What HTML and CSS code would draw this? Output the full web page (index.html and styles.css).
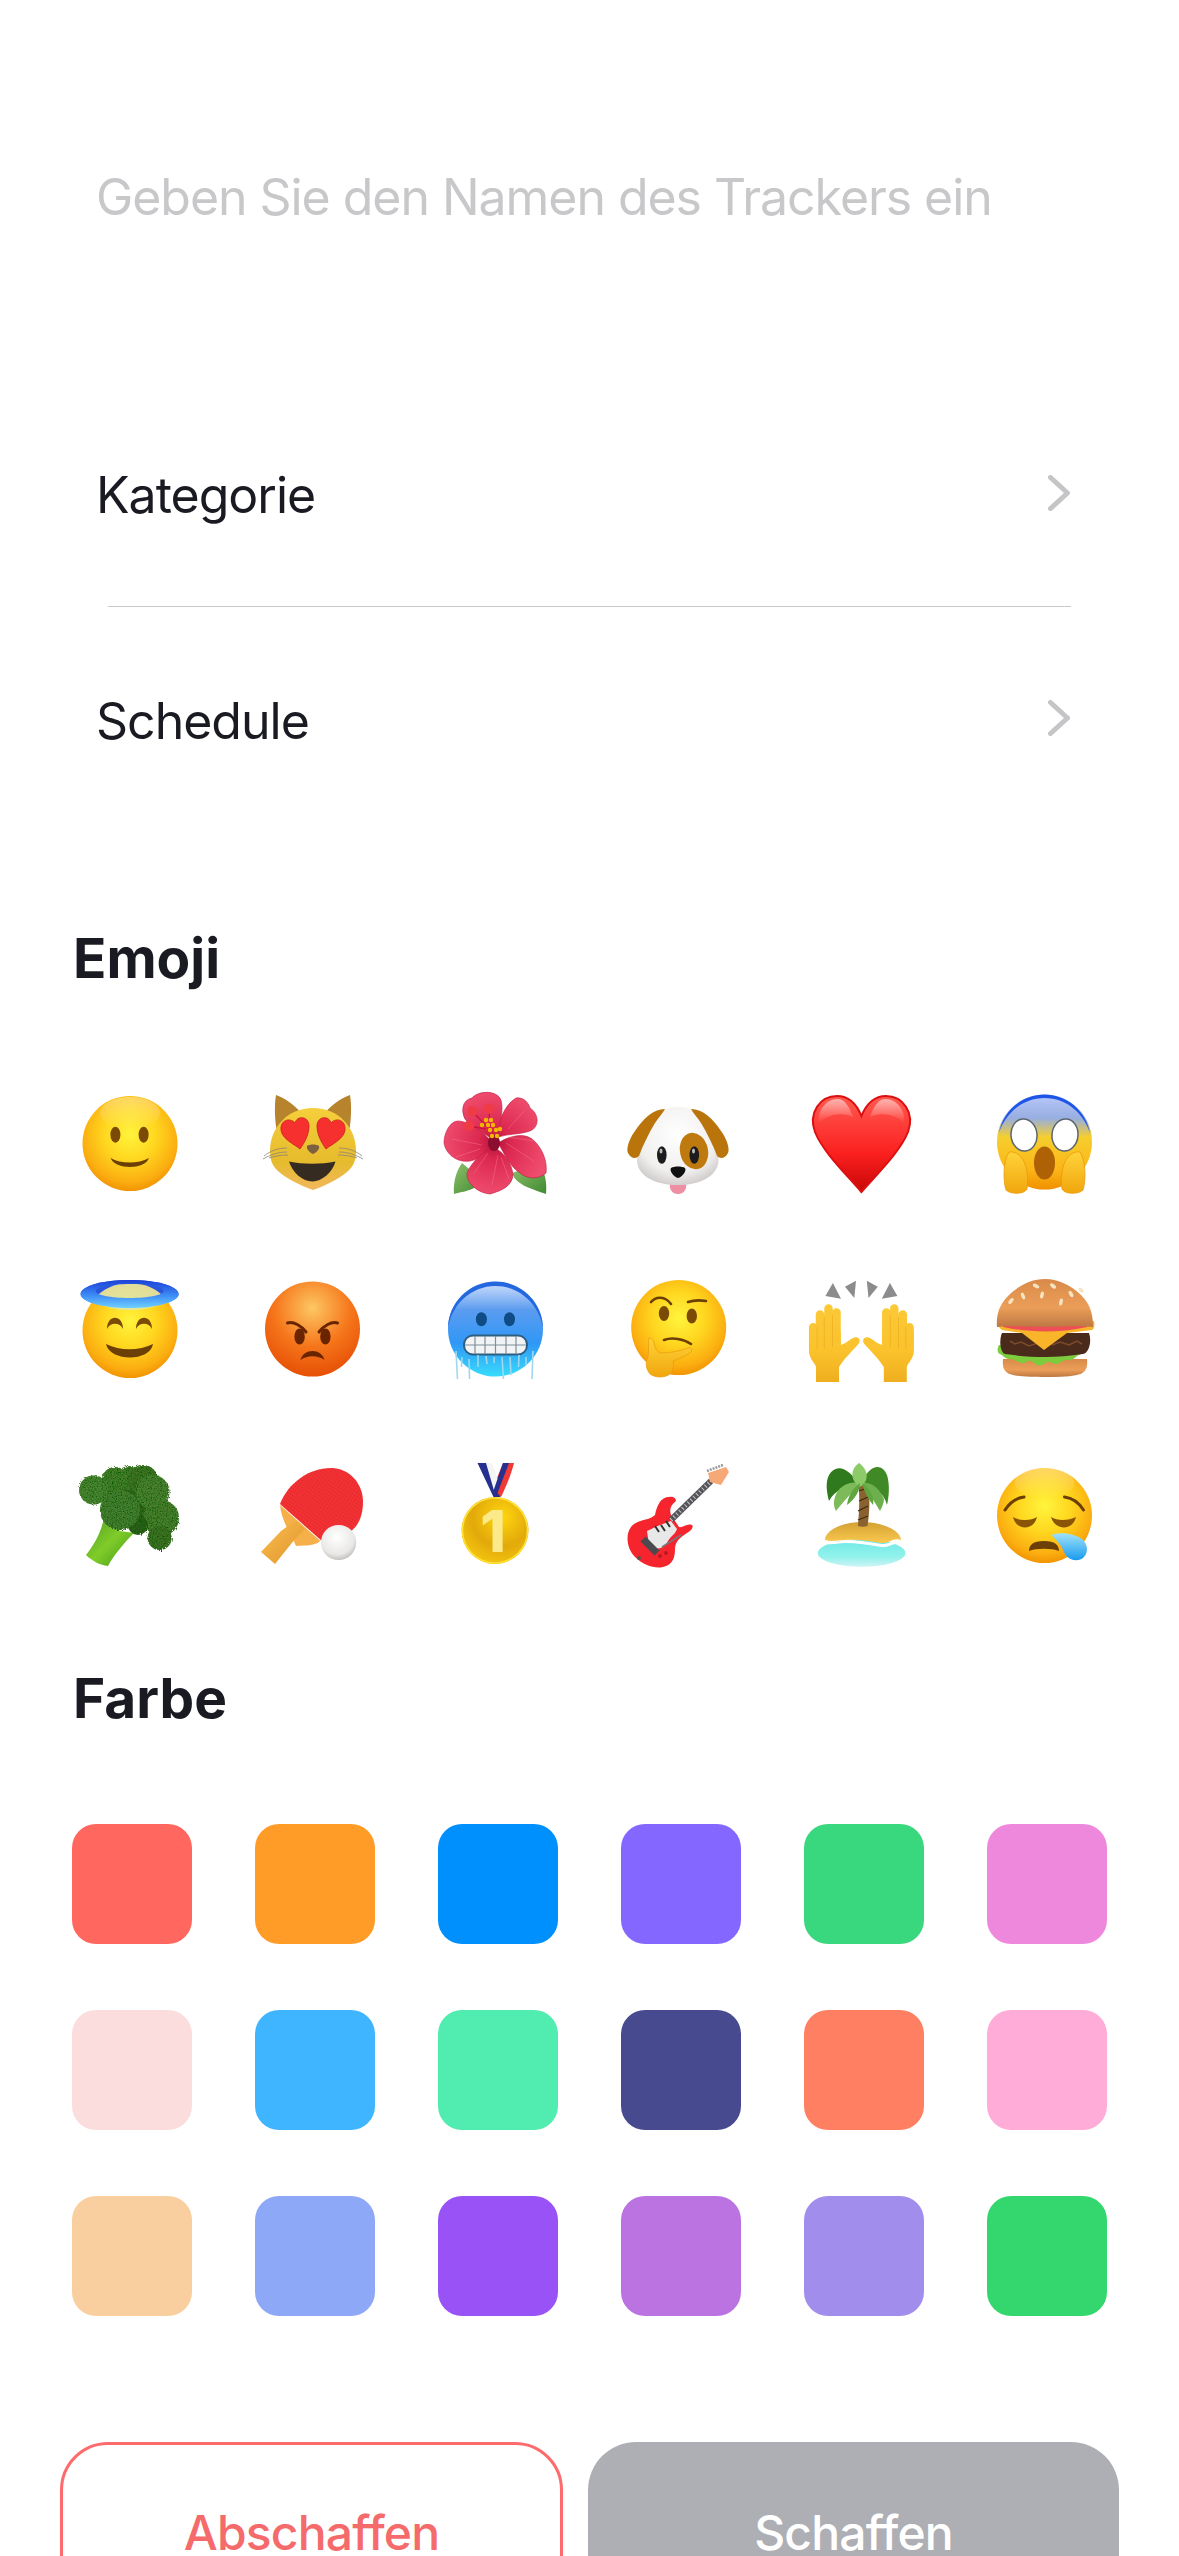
FILE: index.html
```html
<!DOCTYPE html>
<html lang="de">
<head>
    <meta charset="UTF-8">
    <meta name="viewport" content="width=device-width, initial-scale=1.0">
    <title>Neuer Tracker</title>
    <link rel="stylesheet" href="styles.css">
</head>
<body>

    <!-- Shared gradients for the emoji -->
    <svg class="defs" aria-hidden="true">
        <defs>
            <radialGradient id="face" cx=".5" cy=".4" r=".62">
                <stop offset="0" stop-color="#fff43c"/><stop offset=".45" stop-color="#ffd61f"/>
                <stop offset=".82" stop-color="#fbad10"/><stop offset="1" stop-color="#ef8f00"/>
            </radialGradient>
            <linearGradient id="shine" x1="0" y1="0" x2="0" y2="1">
                <stop offset="0" stop-color="#fff" stop-opacity=".55"/><stop offset="1" stop-color="#fff" stop-opacity="0"/>
            </linearGradient>
            <linearGradient id="catFace" x1="0" y1="0" x2="0" y2="1">
                <stop offset="0" stop-color="#f5cf3c"/><stop offset=".65" stop-color="#e6bb2c"/><stop offset="1" stop-color="#f2b75e"/>
            </linearGradient>
            <radialGradient id="petal" gradientUnits="userSpaceOnUse" cx="59" cy="60" r="54">
                <stop offset="0" stop-color="#b0123a"/><stop offset=".3" stop-color="#dc2850"/><stop offset="1" stop-color="#f04e6e"/>
            </radialGradient>
            <linearGradient id="leaf" x1="0" y1="0" x2="1" y2="1">
                <stop offset="0" stop-color="#8fc06a"/><stop offset="1" stop-color="#3f8a32"/>
            </linearGradient>
            <radialGradient id="dogHead" cx=".5" cy=".35" r=".7">
                <stop offset="0" stop-color="#fff"/><stop offset=".7" stop-color="#f1efee"/><stop offset="1" stop-color="#c9c6c4"/>
            </radialGradient>
            <linearGradient id="heart" x1="0" y1="0" x2="0" y2="1">
                <stop offset="0" stop-color="#ff5a50"/><stop offset=".6" stop-color="#fb2020"/><stop offset="1" stop-color="#c80606"/>
            </linearGradient>
            <linearGradient id="scream" x1="0" y1="0" x2="0" y2="1">
                <stop offset="0" stop-color="#b9c8fb"/><stop offset=".25" stop-color="#97aee0"/><stop offset=".45" stop-color="#f6cf2d"/>
                <stop offset=".8" stop-color="#fbb417"/><stop offset="1" stop-color="#ef9000"/>
            </linearGradient>
            <linearGradient id="hand" x1="0" y1="0" x2="0" y2="1">
                <stop offset="0" stop-color="#ffd33a"/><stop offset="1" stop-color="#f1a60d"/>
            </linearGradient>
            <linearGradient id="palm" gradientUnits="userSpaceOnUse" x1="0" y1="35" x2="0" y2="113">
                <stop offset="0" stop-color="#fbc937"/><stop offset=".6" stop-color="#fbc22c"/><stop offset="1" stop-color="#eeae1f"/>
            </linearGradient>
            <linearGradient id="halo" x1="0" y1="0" x2="0" y2="1">
                <stop offset="0" stop-color="#1c3fd6"/><stop offset=".55" stop-color="#3d8cf6"/><stop offset="1" stop-color="#6fd0ff"/>
            </linearGradient>
            <radialGradient id="angry" cx=".5" cy=".28" r=".8">
                <stop offset="0" stop-color="#fdc763"/><stop offset=".5" stop-color="#f6761b"/><stop offset="1" stop-color="#e24600"/>
            </radialGradient>
            <linearGradient id="cold" x1="0" y1="0" x2="0" y2="1">
                <stop offset="0" stop-color="#d4e1fb"/><stop offset=".3" stop-color="#5b9cf0"/><stop offset=".65" stop-color="#2f97f6"/><stop offset="1" stop-color="#38dcfc"/>
            </linearGradient>
            <linearGradient id="bun" x1="0" y1="0" x2="0" y2="1">
                <stop offset="0" stop-color="#d98a4a"/><stop offset=".6" stop-color="#eb9e58"/><stop offset="1" stop-color="#bd7743"/>
            </linearGradient>
            <linearGradient id="stem" x1="0" y1="0" x2="1" y2="1">
                <stop offset="0" stop-color="#4f9a22"/><stop offset=".5" stop-color="#80cc2a"/><stop offset="1" stop-color="#3f9a14"/>
            </linearGradient>
            <radialGradient id="ball" cx=".45" cy=".35" r=".7">
                <stop offset="0" stop-color="#fff"/><stop offset=".7" stop-color="#e9e8e6"/><stop offset="1" stop-color="#b8b6b3"/>
            </radialGradient>
            <linearGradient id="wood" x1="0" y1="0" x2="1" y2="1">
                <stop offset="0" stop-color="#fbc050"/><stop offset="1" stop-color="#e0932b"/>
            </linearGradient>
            <radialGradient id="gold" cx=".6" cy=".3" r=".8">
                <stop offset="0" stop-color="#ffd60f"/><stop offset=".55" stop-color="#e2a90a"/><stop offset="1" stop-color="#f8cc10"/>
            </radialGradient>
            <linearGradient id="sand" x1="0" y1="0" x2="0" y2="1">
                <stop offset="0" stop-color="#d2a133"/><stop offset="1" stop-color="#fbc94f"/>
            </linearGradient>
            <linearGradient id="water" x1="0" y1="0" x2="0" y2="1">
                <stop offset="0" stop-color="#6fe9e6"/><stop offset=".65" stop-color="#93f2ec"/><stop offset="1" stop-color="#cdf3f5"/>
            </linearGradient>
            <linearGradient id="tear" x1="0" y1="0" x2="0" y2="1">
                <stop offset="0" stop-color="#9fe2fb"/><stop offset="1" stop-color="#1a9bee"/>
            </linearGradient>
            <pattern id="rubber" width="3" height="3" patternUnits="userSpaceOnUse" patternTransform="rotate(35)">
                <circle cx="1.500" cy="1.500" r=".8" fill="#c81d22" opacity=".55"/>
            </pattern>
            <filter id="rough" x="-5%" y="-5%" width="110%" height="110%">
                <feTurbulence type="fractalNoise" baseFrequency=".8" numOctaves="2" seed="4" result="n"/>
                <feDisplacementMap in="SourceGraphic" in2="n" scale="4" result="d"/>
                <feColorMatrix in="n" type="matrix" values="0 0 0 0 0  0 0 0 0 .1  0 0 0 0 0  0 0 0 -2.500 1.500" result="dark"/>
                <feComposite in="dark" in2="d" operator="in" result="spots"/>
                <feMerge><feMergeNode in="d"/><feMergeNode in="spots"/></feMerge>
            </filter>
        </defs>
    </svg>

    <div class="page">

        <!-- Name des Trackers -->
        <div class="name-field">Geben Sie den Namen des Trackers ein</div>

        <!-- Kategorie / Schedule -->
        <div class="options">
            <div class="option">
                <span>Kategorie</span>
                <svg class="chevron" viewBox="0 0 22 36"><polyline points="2.5,2.5 19.5,18 2.5,33.5"/></svg>
            </div>
            <div class="divider"></div>
            <div class="option option-last">
                <span>Schedule</span>
                <svg class="chevron" viewBox="0 0 22 36"><polyline points="2.5,2.5 19.5,18 2.5,33.5"/></svg>
            </div>
        </div>

        <h2 class="section-title title-emoji">Emoji</h2>
        <div class="emoji-grid">

            <!-- laechelnd -->
            <svg class="emoji" viewBox="0 0 120 120">
                <circle cx="60" cy="60.500" r="47.500" fill="url(#face)"/>
                <ellipse cx="60" cy="30" rx="30" ry="16" fill="url(#shine)" opacity=".6"/>
                <ellipse cx="45.400" cy="51.700" rx="5" ry="8" fill="#7a4a06"/>
                <ellipse cx="73.600" cy="51.700" rx="5" ry="8" fill="#7a4a06"/>
                <path d="M40.500 75c10 6 28 6 38.500 0-4 12-34 12-38.500 0z" fill="#6b3f05"/>
            </svg>

            <!-- Katze mit Herzaugen -->
            <svg class="emoji" viewBox="0 0 120 120">
                <path d="M23 12c8 3 18 9 24 17L24 50c-2-12-3-26-1-38zM97 12c-8 3-18 9-24 17l23 21c2-12 3-26 1-38z" fill="#b7832c"/>
                <path d="M60 25c26 0 43 20 43 43 0 10-3 16-9 21-10 8-23 14-34 18-11-4-24-10-34-18-6-5-9-11-9-21 0-23 17-43 43-43z" fill="url(#catFace)"/>
                <path d="M47 66c-6-5-18-10-19-19-1-10 9-13 14-7 2-8 14-7 14 3 0 8-4 16-9 23z" fill="#f5302f" stroke="#c91d1d" stroke-width=".8"/>
                <path d="M73 66c6-5 18-10 19-19 1-10-9-13-14-7-2-8-14-7-14 3 0 8 4 16 9 23z" fill="#f5302f" stroke="#c91d1d" stroke-width=".8"/>
                <path d="M54 63c3-2 9-2 12 0 1 3-3 7-6 8-3-1-7-5-6-8z" fill="#7d6040"/>
                <path d="M36 78.500c14 3 32 3 46.500 0-3 11-14 20-23 20-10 0-20-9-23.500-20z" fill="#352b20"/>
                <g stroke="#8a8378" stroke-width=".8" fill="none">
                    <path d="M34 65c-9 0-17 3-23 8M34 69c-9 0-17 3-24 7M35 72c-7 0-13 1-19 3"/>
                    <path d="M86 65c9 0 17 3 23 8M86 69c9 0 17 3 24 7M85 72c7 0 13 1 19 3"/>
                </g>
            </svg>

            <!-- Hibiskus -->
            <svg class="emoji" viewBox="0 0 120 120">
                <path d="M26 80c-6 8-9 20-8 31 10-3 22-3 28-14z" fill="url(#leaf)"/>
                <path d="M76 90c4 12 20 16 34 21 1-10 0-22-8-30z" fill="url(#leaf)"/>
                <g fill="url(#petal)" stroke="#bd1c44" stroke-width=".6">
                    <path d="M60 55C62 40 68 22 80 15 86 14 92 18 94 25 102 30 104 42 96 47 86 52 72 50 60 55z"/>
                    <path d="M62 60C75 52 88 50 96 56 104 62 112 76 110 90 104 96 92 97 84 90 74 84 68 70 62 60z"/>
                    <path d="M58 58C50 50 34 44 29 36 25 28 26 17 36 15 42 8 58 7 64 15 68 22 66 40 58 58z"/>
                    <path d="M58 62C50 50 32 38 22 38 14 38 8 50 8 60 10 72 22 80 34 78 44 76 52 70 58 62z"/>
                    <path d="M58 64C48 68 36 78 31 90 30 100 42 110 54 111 64 108 76 104 77 92 76 80 68 70 58 64z"/>
                </g>
                <g stroke="#f77d98" stroke-width=".7" opacity=".6" fill="none">
                    <path d="M62 72l-6 30M65 74l8 22M52 70l-14 20M70 60l28 18M72 54l26 4M72 46l16-18M46 62l-30-6M44 66l-24 8"/>
                </g>
                <ellipse cx="58" cy="60" rx="6" ry="8" fill="#8b0d2f"/>
                <path d="M54 47L37 29M54 46L53 26M50 46L33 43" stroke="#c8163f" stroke-width="1.300"/>
                <circle cx="36.500" cy="28" r="5.300" fill="#ef3b45"/><circle cx="53" cy="25.500" r="5.300" fill="#ef3b45"/><circle cx="33" cy="42.700" r="5.300" fill="#ef3b45"/>
                <g fill="#f4b800">
                    <circle cx="50" cy="37" r="2.200"/><circle cx="55" cy="37" r="2.200"/><circle cx="46" cy="42" r="2.200"/><circle cx="52" cy="42" r="2.200"/>
                    <circle cx="57" cy="42" r="2.200"/><circle cx="54" cy="47" r="2.200"/><circle cx="60" cy="47" r="2.200"/><circle cx="64" cy="46" r="2.200"/>
                    <circle cx="56" cy="53" r="2.200"/><circle cx="61" cy="53" r="2.200"/>
                </g>
            </svg>

            <!-- Hund -->
            <svg class="emoji" viewBox="0 0 120 120">
                <path d="M51 99c5-3 12-3 16 0 1 6-1 12-8 12s-9-6-8-12z" fill="#ee8fa3"/>
                <path d="M59 23.700C76 23.700 88 36 90 52 92 58 100 66 99.600 78 98 94 80 102 59 102 38 102 19 94 18 78 18 66 26 58 28 52 30 36 42 23.700 59 23.700z" fill="url(#dogHead)"/>
                <ellipse cx="75" cy="68" rx="14" ry="18.500" fill="#bf7a0f" transform="rotate(-12 75 68)"/>
                <path d="M46 26C34 26 24 36 16 48 10 56 7 66 9 70 12 76 17 76 20 73 24 62 30 50 36 40 40 34 44 30 46 26z" fill="#b9740c"/>
                <path d="M72 26C84 26 94 36 102 48 108 56 111 66 109 70 106 76 101 76 98 73 94 62 88 50 82 40 78 34 74 30 72 26z" fill="#b9740c"/>
                <ellipse cx="42.800" cy="72" rx="4.800" ry="8.800" fill="#1c1c1e"/><ellipse cx="75.300" cy="72" rx="4.800" ry="8.800" fill="#1c1c1e"/>
                <ellipse cx="42" cy="68" rx="1.500" ry="2.500" fill="#fff" opacity=".7"/><ellipse cx="74.500" cy="68" rx="1.500" ry="2.500" fill="#fff" opacity=".7"/>
                <path d="M52 85c3-2 11-2 14 0 2 3-3 9-7 10-4-1-9-7-7-10z" fill="#111"/>
            </svg>

            <!-- Herz -->
            <svg class="emoji" viewBox="0 0 120 120">
                <path d="M59.400 109C44 91 21 69 13 49 6 30 18 13 35 13c12 0 20 9 24.400 20C64 22 72 13 84 13c17 0 29 17 22 36-8 20-31 42-46.600 60z" fill="url(#heart)" stroke="#dc1010" stroke-width="2"/>
                <path d="M36 16c-13 0-21 13-19 24 8-9 24-11 34-6-3-9-8-18-15-18zM83 16c-7 0-12 9-15 18 10-5 26-3 34 6 2-11-6-24-19-24z" fill="url(#shine)"/>
            </svg>

            <!-- Schrei -->
            <svg class="emoji" viewBox="0 0 120 120">
                <circle cx="59.500" cy="59" r="47.500" fill="url(#scream)"/>
                <path d="M14 50C18 28 37 11.500 59.500 11.500S101 28 105 50C99 31 82 15 59.500 15S20 31 14 50z" fill="#1f55e6"/>
                <ellipse cx="39" cy="52" rx="13" ry="16" fill="#fff" stroke="#5c6470" stroke-width="1.500" transform="rotate(-6 39 52)"/>
                <ellipse cx="80" cy="52" rx="13" ry="16" fill="#fff" stroke="#5c6470" stroke-width="1.500" transform="rotate(6 80 52)"/>
                <ellipse cx="59.500" cy="80" rx="10.500" ry="16.500" fill="#ae6205"/>
                <path d="M24 69c7-1 13 4 16 12 3 9 3 18 2 25-2 5-16 6-21 1-3-9-3-29 3-38z" fill="url(#hand)" stroke="#e89a0a" stroke-width=".8"/>
                <path d="M95 69c-7-1-13 4-16 12-3 9-3 18-2 25 2 5 16 6 21 1 3-9 3-29-3-38z" fill="url(#hand)" stroke="#e89a0a" stroke-width=".8"/>
            </svg>

            <!-- Heiligenschein -->
            <svg class="emoji" viewBox="0 0 120 120">
                <ellipse cx="59.600" cy="25" rx="49" ry="14" fill="#2a55dd"/>
                <circle cx="60" cy="61.500" r="47.500" fill="url(#face)"/>
                <path d="M60 14c-15 0-28 6-37 17 9 7 24 10 37 10s28-3 37-10c-9-11-22-17-37-17z" fill="#d8e6c4" opacity=".75"/>
                <path d="M10.600 25c0-8 22-14 49-14s49 6 49 14-22 14-49 14-49-6-49-14zm15-3c0 4 15 7 34 7s34-3 34-7-15-7-34-7-34 3-34 7z" fill="url(#halo)" fill-rule="evenodd"/>
                <path d="M37 60c0-15 16-15 16 0-3-7-13-7-16 0zM66 60c0-15 16-15 16 0-3-7-13-7-16 0z" fill="#7a4a06"/>
                <path d="M36 75c14 7 33 7 47 0-3 18-43 18-47 0z" fill="#6b3f05"/>
            </svg>

            <!-- wuetend -->
            <svg class="emoji" viewBox="0 0 120 120">
                <circle cx="59.500" cy="60" r="47.500" fill="url(#angry)"/>
                <ellipse cx="46.600" cy="67.500" rx="5.200" ry="8" fill="#6b2400"/><ellipse cx="72.400" cy="67.500" rx="5.200" ry="8" fill="#6b2400"/>
                <path d="M34.500 54c6-2 14 3 18.500 9" fill="none" stroke="#6b2400" stroke-width="3" stroke-linecap="round"/>
                <path d="M84.500 54c-6-2-14 3-18.500 9" fill="none" stroke="#6b2400" stroke-width="3" stroke-linecap="round"/>
                <path d="M47.500 91c3-12 21-12 24 0-7-5-17-5-24 0z" fill="#6b2400"/>
            </svg>

            <!-- Frieren -->
            <svg class="emoji" viewBox="0 0 120 120">
                <circle cx="59.500" cy="60" r="47.500" fill="url(#cold)"/>
                <path d="M12 60C12 34 33 12.500 59.500 12.500S107 34 107 60C104 36 84 17 59.500 17S15 36 12 60z" fill="#2468e0"/>
                <ellipse cx="45.400" cy="50.300" rx="5.500" ry="7" fill="#0f4c86"/><ellipse cx="73.500" cy="50.300" rx="5.500" ry="7" fill="#0f4c86"/>
                <rect x="28" y="66.500" width="63" height="19" rx="9" fill="#f1f3f4" stroke="#2d5f80" stroke-width="2"/>
                <path d="M39 67v18M49 67v18M59.500 67v18M70 67v18M80 67v18M29 76h61" stroke="#7d8f9b" stroke-width="1.200"/>
                <g fill="none" stroke="#9fd8ee" stroke-width="1.600">
                    <path d="M20 82l1.500 28M26 88l-.5 10M33 90l.5 20M42 86v12M50 87l1 8M66 88l1.500 22M58 88v6M74 88l1 18M83 86l-.5 12M90 88v8M97 82l-1 28"/>
                </g>
            </svg>

            <!-- nachdenklich -->
            <svg class="emoji" viewBox="0 0 120 120">
                <circle cx="59.700" cy="58.500" r="47.500" fill="url(#face)"/>
                <ellipse cx="45" cy="44.500" rx="5.200" ry="7.500" fill="#7a4a06"/><ellipse cx="72.800" cy="47" rx="5.200" ry="7.500" fill="#7a4a06"/>
                <path d="M32 33c5-6 14-6 20 2" fill="none" stroke="#6b3f05" stroke-width="2.600" stroke-linecap="round"/>
                <path d="M69 33c6-2 12-2 18-1" fill="none" stroke="#6b3f05" stroke-width="2.600" stroke-linecap="round"/>
                <path d="M45 71c8-3 20-1 27 4" fill="none" stroke="#6b3f05" stroke-width="2.600" stroke-linecap="round"/>
                <path d="M30 69c3 0 4 2 5 5 1 5 3 9 6 10 10 0 20-2 28-5 4-1 5 3 2 5-5 3-11 6-17 8 1 5 0 10-3 13-5 4-15 4-20 0-4-5-5-11-2-17 1-6 0-13 1-19z" fill="url(#hand)" stroke="#e89a0a" stroke-width=".7"/>
            </svg>

            <!-- Haende hoch -->
            <svg class="emoji" viewBox="0 0 120 120">
                <g fill="#8c8c8e">
                    <path d="M30.900 14L23.400 27 39 29.700z"/>
                    <path d="M54 11.700L43 17.700 52.300 29z"/>
                    <path d="M64.800 11.700L75.800 17.700 66.500 29z"/>
                    <path d="M87.900 14L95.400 27 79.800 29.700z"/>
                </g>
                <g id="raisedHand">
                    <g stroke="url(#palm)" stroke-width="8.500" stroke-linecap="round" fill="none">
                        <path d="M11.200 58.300l.01 22M18 45.500l.01 35M26.500 39.500l.01 41M34.500 43.500l.01 37"/>
                    </g>
                    <path d="M7 62V84C9 92 13 94 14 98V113H37V98C42 90 50 82 56.500 75 60 70 55 67 51 69 47 71 43 75 38.700 76V62z" fill="url(#palm)"/>
                    <path d="M15 58v22M22.300 48v32M30.500 46v32" stroke="#e3a41a" stroke-width=".7" opacity=".7"/>
                </g>
                <use href="#raisedHand" transform="translate(118.800 0) scale(-1 1)"/>
            </svg>

            <!-- Burger -->
            <svg class="emoji" viewBox="0 0 120 120">
                <path d="M18 90h84c1 10-2 14-10 16-10 2-22 2-32 2s-24 0-32-2c-8-2-11-6-10-16z" fill="url(#bun)"/>
                <path d="M14 76c-2 3-2 8 1 9 4 2 6 6 11 5 4-1 7 5 12 4 4-1 7-4 10-1 4 4 8 5 12 1 4-3 7 1 12 1 4-1 7-5 11-4 5 1 8-4 11-5 3-1 4-6 2-9z" fill="#7ccc3e"/>
                <path d="M17 64h87c3 8 0 20-6 21-26 4-50 4-78 0-5-2-6-14-3-21z" fill="#4a2a1a"/>
                <path d="M25 72l5 3 6-2 8 4 9-3M67 76l8-3 9 3 8-4 5 3" stroke="#7a4a2c" stroke-width="1.500" fill="none"/>
                <path d="M13 52c30-3 65-3 96 0 1 4 0 8-2 9l-25 3-23 17-22-17-20-3c-3-2-5-5-4-9z" fill="#f8b52a"/>
                <path d="M18 52h84v6c-28 6-56 6-84 0z" fill="#ee4f55"/>
                <path d="M12 58c-1-12 2-22 12-32 9-9 22-16 36-16s27 7 36 16c10 10 12 20 12 32-3 0-8-1-12-1-25 1-50 1-74 0-5 0-7 1-10 1z" fill="url(#bun)"/>
                <g fill="#f6e3c2">
                    <ellipse cx="38" cy="27" rx="1.800" ry="3.500" transform="rotate(-20 38 27)"/><ellipse cx="51" cy="17" rx="1.800" ry="3.500" transform="rotate(-60 51 17)"/>
                    <ellipse cx="68" cy="17" rx="1.800" ry="3.500" transform="rotate(-50 68 17)"/><ellipse cx="57" cy="26" rx="1.800" ry="3.500" transform="rotate(10 57 26)"/>
                    <ellipse cx="76" cy="33" rx="1.800" ry="3.500" transform="rotate(10 76 33)"/><ellipse cx="86" cy="25" rx="1.800" ry="3.500" transform="rotate(-30 86 25)"/>
                    <ellipse cx="26" cy="32" rx="1.800" ry="3.500" transform="rotate(40 26 32)"/><ellipse cx="96" cy="21" rx="1.800" ry="3" transform="rotate(-50 96 21)"/>
                </g>
            </svg>

            <!-- Brokkoli -->
            <svg class="emoji" viewBox="0 0 120 120">
                <path d="M34 62C32 76 24 90 16 100 22 106 30 110 38 111 44 100 54 88 64 78L50 76 44 70z" fill="url(#stem)"/>
                <g filter="url(#rough)">
                    <circle cx="60" cy="45" r="26" fill="#33641c"/>
                    <circle cx="59" cy="23" r="12" fill="#42792a"/><circle cx="73" cy="25" r="15" fill="#3f7527"/>
                    <circle cx="45" cy="25" r="13" fill="#45802c"/><circle cx="23.600" cy="35" r="14.500" fill="#4c8732"/>
                    <circle cx="82.500" cy="37" r="17" fill="#4b8230"/><circle cx="91" cy="63" r="18" fill="#4a802f"/>
                    <circle cx="89.600" cy="83" r="12" fill="#3f7228"/><circle cx="68" cy="70" r="10" fill="#2f5e1c"/>
                    <circle cx="50" cy="55" r="20" fill="#478030"/>
                </g>
            </svg>

            <!-- Tischtennis -->
            <svg class="emoji" viewBox="0 0 120 120">
                <path d="M27 50L67.400 86C60 92 48 90 43 91L38 80C32 70 28 60 27 50z" fill="#f6b04a"/>
                <path d="M43 65L52 74 42 84 22 109 8 97 28 76z" fill="url(#wood)"/>
                <path d="M27 49C35 28 56 13 78 13 96 13 110 28 110 47 110 62 104 72 98 76L90 80 70 87z" fill="#f33134"/>
                <path d="M27 49C35 28 56 13 78 13 96 13 110 28 110 47 110 62 104 72 98 76L90 80 70 87z" fill="url(#rubber)"/>
                <circle cx="85.600" cy="87.500" r="17.600" fill="url(#ball)"/>
            </svg>

            <!-- Medaille -->
            <svg class="emoji" viewBox="0 0 120 120">
                <path d="M41.500 8h11l12 34h-7z" fill="#25308f"/>
                <path d="M78 8H67L57 33l8 9c5-10 10-22 13-34z" fill="#f03a36"/>
                <path d="M52 8l6 14 4-14z" fill="#fff"/>
                <path d="M50 8h6l8 22-5 9z" fill="#f5f5f5"/>
                <path d="M67 8h6L60 42l-3-5z" fill="#25308f"/>
                <circle cx="59" cy="75.500" r="33.500" fill="url(#gold)"/>
                <circle cx="59" cy="75.500" r="32.500" fill="none" stroke="#ffe23a" stroke-width="1.500"/>
                <text class="medal-digit" x="57" y="97" text-anchor="middle">1</text>
            </svg>

            <!-- Gitarre -->
            <svg class="emoji" viewBox="0 0 120 120">
                <path d="M50 42C42 42 38 50 36 60 30 66 18 64 12 72 6 80 8 94 16 102 24 110 36 114 44 112 54 110 56 102 56 94 56 86 62 82 68 78 72 76 75 72 73 70 68 68 64 73 60 72L52 60C50 54 52 50 57 46 57 43 54 41 50 42z" fill="#f6252d"/>
                <path d="M28 76C36 72 46 68 52 66L58 74C56 80 50 82 48 88 44 94 36 96 30 90z" fill="#e8e8e8"/>
                <path d="M52 65L92 26" stroke="#55555a" stroke-width="6"/>
                <path d="M52 65L92 26" stroke="#c8c8c8" stroke-width="4" stroke-dasharray="1 3"/>
                <path d="M89 18L107 12 110 17 102 30 91 27z" fill="#f7a877"/>
                <path d="M88 16L104 10" stroke="#9a9a9a" stroke-width="2.500" stroke-dasharray="2 1"/>
                <path d="M24 84L38 98" stroke="#4a4a4f" stroke-width="7"/>
                <path d="M36 71l4 6M42 70l4 6M47 66l4 6" stroke="#333" stroke-width="2"/>
                <path d="M43 92L62 80" stroke="#77777c" stroke-width="1.500"/>
                <circle cx="41" cy="101" r="2" fill="#b91a1e"/><circle cx="47" cy="98" r="2" fill="#b91a1e"/>
                <circle cx="20" cy="103" r="2" fill="#555"/>
            </svg>

            <!-- Insel -->
            <svg class="emoji" viewBox="0 0 120 120">
                <ellipse cx="59.600" cy="98" rx="44" ry="13.700" fill="url(#water)"/>
                <path d="M23 85c0-10 18-18 37-18s39 8 39 18c-8-3-12 4-20 3-12-2-24-4-36-3-7 0-13 2-20 0z" fill="url(#sand)"/>
                <path d="M21 86c7 3 14 0 22-1 12 0 24 2 36 4 8 1 12-5 22-3l1 2c-9-2-14 5-23 4-12-2-24-4-36-4-8 0-15 3-22 0z" fill="#fff"/>
                <path d="M56.500 28h9c3 14 2 30 0 43-3 1-7 1-9.500 0 1-14 2-28 .5-43z" fill="#8a6230"/>
                <path d="M57 36l9-3M57 46l9-4M56 56l10-5M56 65l10-4" stroke="#3f2a10" stroke-width="1.200"/>
                <path d="M58 30C46 12 34 8 27 20 23 28 25 38 27 46 32 36 44 30 58 30z" fill="#2f7a1c"/>
                <path d="M58 30C68 8 80 8 85 20 88 30 87 42 85 50 82 38 72 30 58 30z" fill="#3f8a26"/>
                <path d="M58 28C46 26 36 32 33 42 31 48 32 52 34 56 40 48 50 38 58 28z" fill="#7dbb5a"/>
                <path d="M58 28C70 26 78 34 82 44 82 48 80 52 78 56 72 46 66 36 58 28z" fill="#6fb04e"/>
                <path d="M58 32C48 26 48 14 57 8 66 14 68 26 58 32z" fill="#8ccb68"/>
                <path d="M58 28C50 34 46 42 45 50 53 44 58 36 58 28zM60 28C62 36 66 44 71 50 73 42 67 32 60 28z" fill="#5fa63f"/>
            </svg>

            <!-- schlaefrig -->
            <svg class="emoji" viewBox="0 0 120 120">
                <circle cx="59.500" cy="60.500" r="47.500" fill="url(#face)"/>
                <ellipse cx="59.500" cy="28" rx="30" ry="15" fill="url(#shine)" opacity=".6"/>
                <path d="M20 55c5-8 11-12 19-13" fill="none" stroke="#6b3f05" stroke-width="3" stroke-linecap="round"/>
                <path d="M98.500 55c-5-8-11-12-19-13" fill="none" stroke="#6b3f05" stroke-width="3" stroke-linecap="round"/>
                <path d="M28 62c7 4 18 4 24 0-3 14-21 14-24 0zM66 62c6 4 17 4 25 0-3 14-21 14-25 0z" fill="#8a5606"/>
                <path d="M44 96c0-6 4-10 15-10s15 4 15 10c-7-3-23-3-30 0z" fill="#6b3f05"/>
                <path d="M66.500 80c8-3 20-2 29 3 9 6 8 17 1 21-7 3-14 0-17-6-3-8-8-13-13-18z" fill="url(#tear)"/>
            </svg>
        </div>

        <h2 class="section-title title-color">Farbe</h2>
        <div class="color-grid">
            <div class="swatch c1"></div><div class="swatch c2"></div><div class="swatch c3"></div>
            <div class="swatch c4"></div><div class="swatch c5"></div><div class="swatch c6"></div>
            <div class="swatch c7"></div><div class="swatch c8"></div><div class="swatch c9"></div>
            <div class="swatch c10"></div><div class="swatch c11"></div><div class="swatch c12"></div>
            <div class="swatch c13"></div><div class="swatch c14"></div><div class="swatch c15"></div>
            <div class="swatch c16"></div><div class="swatch c17"></div><div class="swatch c18"></div>
        </div>

        <div class="actions">
            <button class="btn btn-cancel">Abschaffen</button>
            <button class="btn btn-create">Schaffen</button>
        </div>
    </div>

</body>
</html>
```

FILE: styles.css
```css
* {
    box-sizing: border-box;
}

html, body {
    margin: 0;
    padding: 0;
    background: #fff;
}

body {
    font-family: Inter, "Liberation Sans", sans-serif;
    color: #1a1b22;
    width: 1179px;
    height: 2556px;
    overflow: hidden;
}

.defs {
    position: absolute;
    width: 0;
    height: 0;
}

.page {
    padding-top: 84px;
}

/* Name und Optionen */
.name-field {
    height: 225px;
    padding-left: 96px;
    display: flex;
    align-items: center;
    font-size: 50px;
    letter-spacing: -1.05px;
    color: #c8c8cb;
}

.options {
    margin-top: 72px;
}

.option {
    height: 225px;
    padding: 0 109px 0 96px;
    display: flex;
    align-items: center;
    justify-content: space-between;
    font-size: 50px;
    letter-spacing: -1px;
}

.option span {
    margin-top: 3px;
}

.option-last {
    height: 224px;
}

.divider {
    height: 1px;
    margin: 0 108px;
    background: #c9c9cc;
}

.chevron {
    width: 22px;
    height: 36px;
    margin-top: -2px;
    fill: none;
    stroke: #c5c5c8;
    stroke-width: 5;
    stroke-linecap: round;
    stroke-linejoin: round;
}

/* Abschnitte */
.section-title {
    margin: 0;
    padding-left: 73px;
    font-size: 55px;
    line-height: 70px;
    font-weight: 700;
}

.title-emoji {
    margin-top: 92px;
}

.title-color {
    margin-top: 88px;
}

.emoji-grid {
    margin: 90px 0 0 70px;
    display: grid;
    grid-template-columns: repeat(6, 120px);
    grid-auto-rows: 120px;
    column-gap: 63px;
    row-gap: 66px;
}

.emoji {
    width: 120px;
    height: 120px;
    display: block;
}

.medal-digit {
    font-family: Inter, sans-serif;
    font-size: 58px;
    font-weight: 800;
    fill: #fbe98a;
}

.color-grid {
    margin: 91px 0 0 72px;
    display: grid;
    grid-template-columns: repeat(6, 120px);
    grid-auto-rows: 120px;
    column-gap: 63px;
    row-gap: 66px;
}

.swatch {
    border-radius: 24px;
}

.c1 { background: #ff675f; }
.c2 { background: #ff9c28; }
.c3 { background: #0090fd; }
.c4 { background: #8467ff; }
.c5 { background: #39d77e; }
.c6 { background: #ee88dc; }
.c7 { background: #fbdddd; }
.c8 { background: #3fb5ff; }
.c9 { background: #50ecb0; }
.c10 { background: #474a8f; }
.c11 { background: #ff7f62; }
.c12 { background: #ffacd9; }
.c13 { background: #f9cf9f; }
.c14 { background: #8da8f7; }
.c15 { background: #9952f5; }
.c16 { background: #bb73e2; }
.c17 { background: #a18dec; }
.c18 { background: #33d76e; }

/* Knoepfe */
.actions {
    margin: 126px 0 0 60px;
    display: flex;
    gap: 25px;
}

.btn {
    height: 180px;
    border-radius: 48px;
    font-family: inherit;
    font-size: 48px;
    font-weight: 500;
    letter-spacing: -.8px;
    padding: 0;
}

.btn-cancel {
    width: 503px;
    background: #fff;
    border: 3px solid #fd6b6d;
    color: #f56b6c;
}

.btn-create {
    width: 531px;
    background: #aeafb4;
    border: none;
    color: #fff;
}
```
